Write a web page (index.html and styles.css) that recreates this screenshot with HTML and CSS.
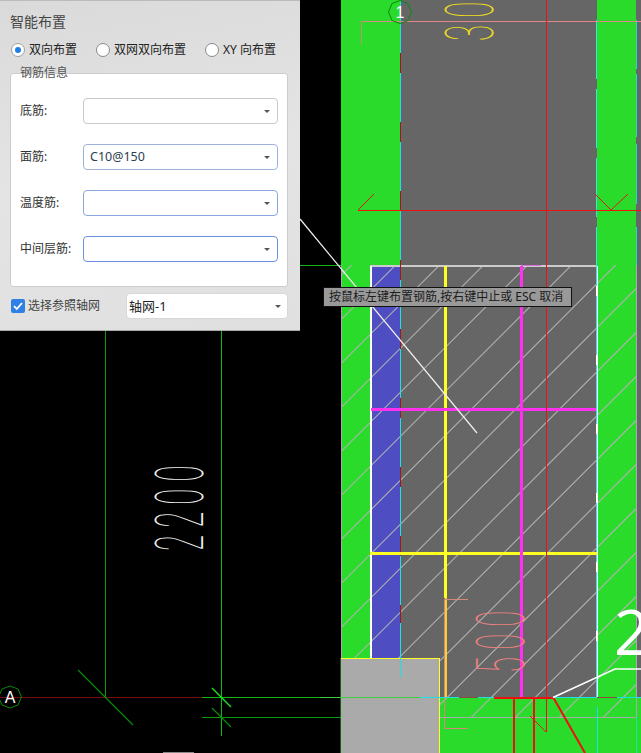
FILE: index.html
```html
<!DOCTYPE html>
<html lang="zh-CN">
<head>
<meta charset="utf-8">
<title>智能布置</title>
<link rel="stylesheet" href="styles.css">
</head>
<body>
<main class="stage">
  <svg class="cad" width="641" height="753" viewBox="0 0 641 753" aria-label="CAD drawing">
    <defs>
      <clipPath id="hatch-clip"><rect x="341" y="265" width="295" height="452"/></clipPath>
    </defs>

    <!-- fills -->
    <rect class="f-green" x="341" y="0" width="59" height="697"/>
    <rect class="f-gray" x="400" y="0" width="197" height="697"/>
    <rect class="f-green" x="597" y="0" width="39" height="697"/>
    <rect class="f-gray" x="636" y="0" width="5" height="697"/>
    <rect class="f-green" x="341" y="697" width="300" height="56"/>
    <rect class="f-blue" x="371" y="266" width="29" height="392"/>

    <!-- grid lines in the black area -->
    <g class="crisp">
      <path class="l-grid" d="M105.5 330V697"/>
      <path class="l-grid-b" d="M221.5 330V736M202 697.5H341M300 265.5H341"/>
      <path class="l-dkred" d="M0 697.5H202"/>
      <path class="l-grid" d="M202 717.5H341"/>
    </g>
    <path class="l-tick" d="M78 670L133 725M212 708L231 727"/>
    <path class="l-tick-bright" d="M212 688L231 707"/>
    <path class="l-edge-green" d="M341 658V753"/>
    <path class="l-stub" d="M163 752.5H194"/>

    <!-- hatch -->
    <g clip-path="url(#hatch-clip)">
      <path class="l-hatch" d="M341 275.7L636 -19.3M341 319.7L636 24.7M341 363.7L636 68.7M341 407.7L636 112.7M341 451.7L636 156.7M341 495.7L636 200.7M341 539.7L636 244.7M341 583.7L636 288.7M341 627.7L636 332.7M341 671.7L636 376.7M341 715.7L636 420.7M341 759.7L636 464.7M341 803.7L636 508.7M341 847.7L636 552.7M341 891.7L636 596.7M341 935.7L636 640.7M341 979.7L636 684.7"/>
    </g>

    <!-- region edges -->
    <g class="crisp">
      <path class="l-frame" d="M341.5 265V658M636.5 265V717M439 717.5H636.5"/>
      <path class="l-top" d="M370 265.5H597"/>
      <path class="l-white2" d="M370.5 266V658"/>
      <path class="l-white2" d="M596.5 266V697"/>
      <path class="l-cyan-dash-r" d="M596.5 20V697"/>
      <path class="l-cyan-dash-f" d="M636.5 20V265"/>
      <path class="l-cyan" d="M400.5 0V677"/>
      <path class="l-dash-red" d="M400.5 53V623"/>
    </g>

    <!-- rebars -->
    <g class="crisp">
      <path class="l-yellow" d="M445.5 266V598M370 553H597"/>
      <path class="l-magenta" d="M521.5 266V697M371 409H596"/>
      <path class="l-magenta-thin" d="M521 265.5H541"/>
      <path class="l-orange" d="M445.5 598V697"/>
    </g>

    <!-- gray block -->
    <rect class="f-block" x="341" y="658" width="98" height="95"/>
    <g class="crisp">
      <path class="l-block" d="M341 658.5H439.5V753"/>
      <path class="l-cyan" d="M400.5 658V677"/>
      <path class="l-salmon" d="M445 599.5H468M444.5 599V728M444 728.5H468"/>
      <path class="l-salmon-top" d="M361 21.5H641"/>
      <path class="l-salmon-leg" d="M361.5 21V45"/>
      <path class="l-red" d="M546.5 0V732"/>
      <path class="l-red" d="M358 210.5H641"/>
      <path class="l-base-green" d="M320 697.5H420"/>
      <path class="l-cyan" d="M420 697.5H641"/>
      <path class="l-base-dk" d="M459 697.5H478M597 697.5H617"/>
      <path class="l-red2" d="M494 697.5H553M513.5 697V753M533.5 697V753"/>
      <path class="l-cyan" d="M597.5 707V753"/>
      <path class="l-teal" d="M636.5 717V753"/>
    </g>
    <path class="l-red-thin" d="M358 210L374 194M595 194L611 210L628 194M546 732L530 716"/>
    <path class="l-red-diag" d="M553 697L585 753"/>
    <path class="l-white-lead" d="M553 697.5L615 669H641"/>
    <path class="l-pointer" d="M300 219L477 433"/>

    <!-- axis bubbles -->
    <polygon class="bubble" points="400,0.5 408,3.5 411.5,12 408,20.5 400,23.5 392,20.5 388.5,12 392,3.5"/>
    <polygon class="bubble" points="10,686 18,689 21.5,697 18,705 10,708 2,705 -1.5,697 2,689"/>
    <text class="axis-label" x="400" y="17.5">1</text>
    <text class="axis-label" x="10" y="702.5">A</text>

    <!-- dimensions -->
    <text class="dim dim-white" transform="translate(203 551) rotate(-90) scale(.44 1)">2200</text>
    <text class="dim dim-salmon" transform="translate(524 673) rotate(-90) scale(.44 1)">500</text>
    <text class="dim dim-yellow" transform="translate(493 41) rotate(-90) scale(.44 1)">30</text>
    <text class="big-two" x="614" y="655">2</text>
  </svg>

  <section class="panel">
    <h1 class="panel-title">智能布置</h1>
    <div class="radio-row">
      <span class="radio-item"><span class="radio radio-on"></span>双向布置</span>
      <span class="radio-item"><span class="radio"></span>双网双向布置</span>
      <span class="radio-item"><span class="radio"></span>XY 向布置</span>
    </div>
    <div class="group">
      <span class="legend">钢筋信息</span>
      <div class="field">
        <span class="field-label">底筋:</span>
        <div class="combo combo-idle"><span class="combo-value"></span><span class="arrow"></span></div>
      </div>
      <div class="field">
        <span class="field-label">面筋:</span>
        <div class="combo combo-a"><span class="combo-value">C10@150</span><span class="arrow"></span></div>
      </div>
      <div class="field">
        <span class="field-label">温度筋:</span>
        <div class="combo combo-b"><span class="combo-value"></span><span class="arrow"></span></div>
      </div>
      <div class="field">
        <span class="field-label">中间层筋:</span>
        <div class="combo combo-c"><span class="combo-value"></span><span class="arrow"></span></div>
      </div>
    </div>
    <div class="footer-row">
      <span class="check-item">
        <span class="check">
          <svg width="14" height="14" viewBox="0 0 14 14"><path class="check-mark" d="M3 7.2L5.8 10L11 4"/></svg>
        </span>选择参照轴网</span>
      <div class="combo combo-grid"><span class="combo-value combo-value-dark">轴网-1</span><span class="arrow"></span></div>
    </div>
  </section>

  <div class="tooltip">按鼠标左键布置钢筋,按右键中止或 ESC 取消</div>
</main>
</body>
</html>
```
FILE: styles.css
```css
* { box-sizing: border-box; }
html, body { margin: 0; padding: 0; background: #000; overflow: hidden; }
body { font-family: "Noto Sans", "Noto Sans CJK SC", sans-serif; }

.stage { position: relative; width: 641px; height: 753px; overflow: hidden; background: #000; }
.cad { position: absolute; left: 0; top: 0; display: block; }
.crisp { shape-rendering: crispEdges; }

.f-green { fill: #2bdb2b; }
.f-gray { fill: #666; }
.f-blue { fill: #4e4ec2; }
.f-block { fill: #aaa; }

.cad path { fill: none; }
.l-grid { stroke: #0a9a0a; stroke-width: 1; }
.l-grid-b { stroke: #12b812; stroke-width: 1; }
.l-dkred { stroke: #7a0c0c; stroke-width: 1; }
.l-tick { stroke: #0a8a0a; stroke-width: 1.2; }
.l-tick-bright { stroke: #1fe01f; stroke-width: 1.4; }
.l-edge-green { stroke: #2bbb2b; stroke-width: 1; }
.l-stub { stroke: #888; stroke-width: 1; }
.l-hatch { stroke: #b2b2b2; stroke-width: 1.05; }
.l-frame { stroke: #aaa; stroke-width: 1; }
.l-top { stroke: #ccc; stroke-width: 2; }
.l-white2 { stroke: #fff; stroke-width: 2; }
.l-cyan { stroke: #1fe0e6; stroke-width: 1; }
.l-cyan-dash-r { stroke: #35e6e6; stroke-width: 1; stroke-dasharray: 59 10; }
.l-cyan-dash-f { stroke: #1fd8d8; stroke-width: 1; stroke-dasharray: 49 5 63 7 60 23; }
.l-dash-red { stroke: #a01818; stroke-width: 1; stroke-dasharray: 20 49; }
.l-yellow { stroke: #ffff22; stroke-width: 3; }
.l-magenta { stroke: #ff30f0; stroke-width: 3; }
.l-magenta-thin { stroke: #e070e0; stroke-width: 1; }
.l-orange { stroke: #f7d030; stroke-width: 2; }
.l-block { stroke: #ffff22; stroke-width: 1; }
.l-salmon { stroke: #d88878; stroke-width: 1; }
.l-salmon-top { stroke: #e08888; stroke-width: 1; }
.l-salmon-leg { stroke: #b09a70; stroke-width: 1; }
.l-red { stroke: #f01010; stroke-width: 1; }
.l-base-green { stroke: #44cc44; stroke-width: 1; }
.l-base-dk { stroke: #8a4a3a; stroke-width: 1; }
.l-red2 { stroke: #ee0f0f; stroke-width: 2; }
.l-teal { stroke: #18e8a0; stroke-width: 1; }
.l-red-thin { stroke: #e81414; stroke-width: 1; }
.l-red-diag { stroke: #ee0f0f; stroke-width: 2; }
.l-white-lead { stroke: #fff; stroke-width: 1.6; }
.l-pointer { stroke: #f2f2f2; stroke-width: 1.2; }

.bubble { fill: none; stroke: #0a8a0a; stroke-width: 1; }
.axis-label {
  font-family: "Liberation Sans", sans-serif;
  font-size: 16px;
  fill: #fff;
  text-anchor: middle;
}
.dim {
  font-family: Roboto, sans-serif;
  font-weight: 100;
  font-size: 67px;
  letter-spacing: 16px;
}
.dim-white { fill: #eee; }
.dim-salmon { fill: #ee8080; }
.dim-yellow { fill: #eedd22; }
.big-two {
  font-family: "Open Sans", sans-serif;
  font-weight: 400;
  font-size: 62px;
  fill: #fff;
}

.panel {
  position: absolute;
  left: 0;
  top: 0;
  width: 300px;
  height: 331px;
  padding: 11px 12px 0 10px;
  background: linear-gradient(170deg, #dadada 0%, #e4e4e4 50%, #e0e0e0 100%);
  border-top: 1px solid #bbb;
  border-bottom: 1px solid #aaa;
  color: #333;
  font-size: 12px;
}
.panel-title {
  margin: 0;
  font-size: 14px;
  font-weight: 400;
  line-height: 20px;
  color: #444;
}
.radio-row {
  display: flex;
  gap: 19px;
  margin: 9px 0 0 1px;
  height: 18px;
  align-items: center;
  color: #222;
}
.radio-item { display: flex; align-items: center; gap: 4px; line-height: 18px; }
.radio {
  display: block;
  position: relative;
  width: 14px;
  height: 14px;
  border: 1px solid #8a8a8a;
  border-radius: 50%;
  background: #fff;
}
.radio-on { border-color: #a0a0a0; }
.radio-on::after {
  content: "";
  position: absolute;
  left: 3px;
  top: 3px;
  width: 6px;
  height: 6px;
  border-radius: 50%;
  background: #1f7fe8;
}

.group {
  position: relative;
  display: flex;
  flex-direction: column;
  gap: 20px;
  width: 278px;
  height: 214px;
  margin-top: 14px;
  padding: 24px 9px 0 9px;
  background: #fff;
  border: 1px solid #ccc;
  border-radius: 3px;
}
.legend {
  position: absolute;
  left: 9px;
  top: -10px;
  line-height: 18px;
  color: #555;
}
.field { display: flex; align-items: center; height: 26px; color: #333; }
.field-label { width: 63px; flex: none; line-height: 18px; }

.combo {
  display: flex;
  align-items: center;
  justify-content: space-between;
  height: 26px;
  background: #fff;
  border: 1px solid #ccc;
  border-radius: 4px;
}
.field .combo { width: 195px; padding: 0 7px 0 6px; }
.combo-idle { border-color: #c9c9c9; }
.combo-a { border-color: #9fb2dc; }
.combo-b { border-color: #8ba6e0; }
.combo-c { border-color: #6c90dc; }
.combo-value { font-size: 12.5px; line-height: 18px; color: #2c3e50; }
.combo-value-dark { color: #222; font-size: 13px; }
.arrow {
  width: 0;
  height: 0;
  border-left: 3px solid transparent;
  border-right: 3px solid transparent;
  border-top: 3px solid #555;
  flex: none;
}

.footer-row {
  display: flex;
  align-items: center;
  justify-content: space-between;
  width: 278px;
  margin-top: 6px;
  height: 26px;
}
.check-item { display: flex; align-items: center; gap: 3px; margin-left: 1px; color: #444; line-height: 18px; }
.check { display: block; width: 14px; height: 14px; border-radius: 2px; background: #2f80e4; }
.check svg { display: block; }
.check-mark { fill: none; stroke: #fff; stroke-width: 1.8; }
.combo-grid { width: 162px; padding: 0 6px 0 2px; border-color: #d8d8d8; }

.tooltip {
  position: absolute;
  left: 323px;
  top: 287px;
  width: 249px;
  height: 20px;
  padding: 0 5px;
  background: #999;
  border: 1px solid #111;
  color: #1c1c1c;
  font-size: 12px;
  line-height: 18px;
  white-space: nowrap;
}
```
